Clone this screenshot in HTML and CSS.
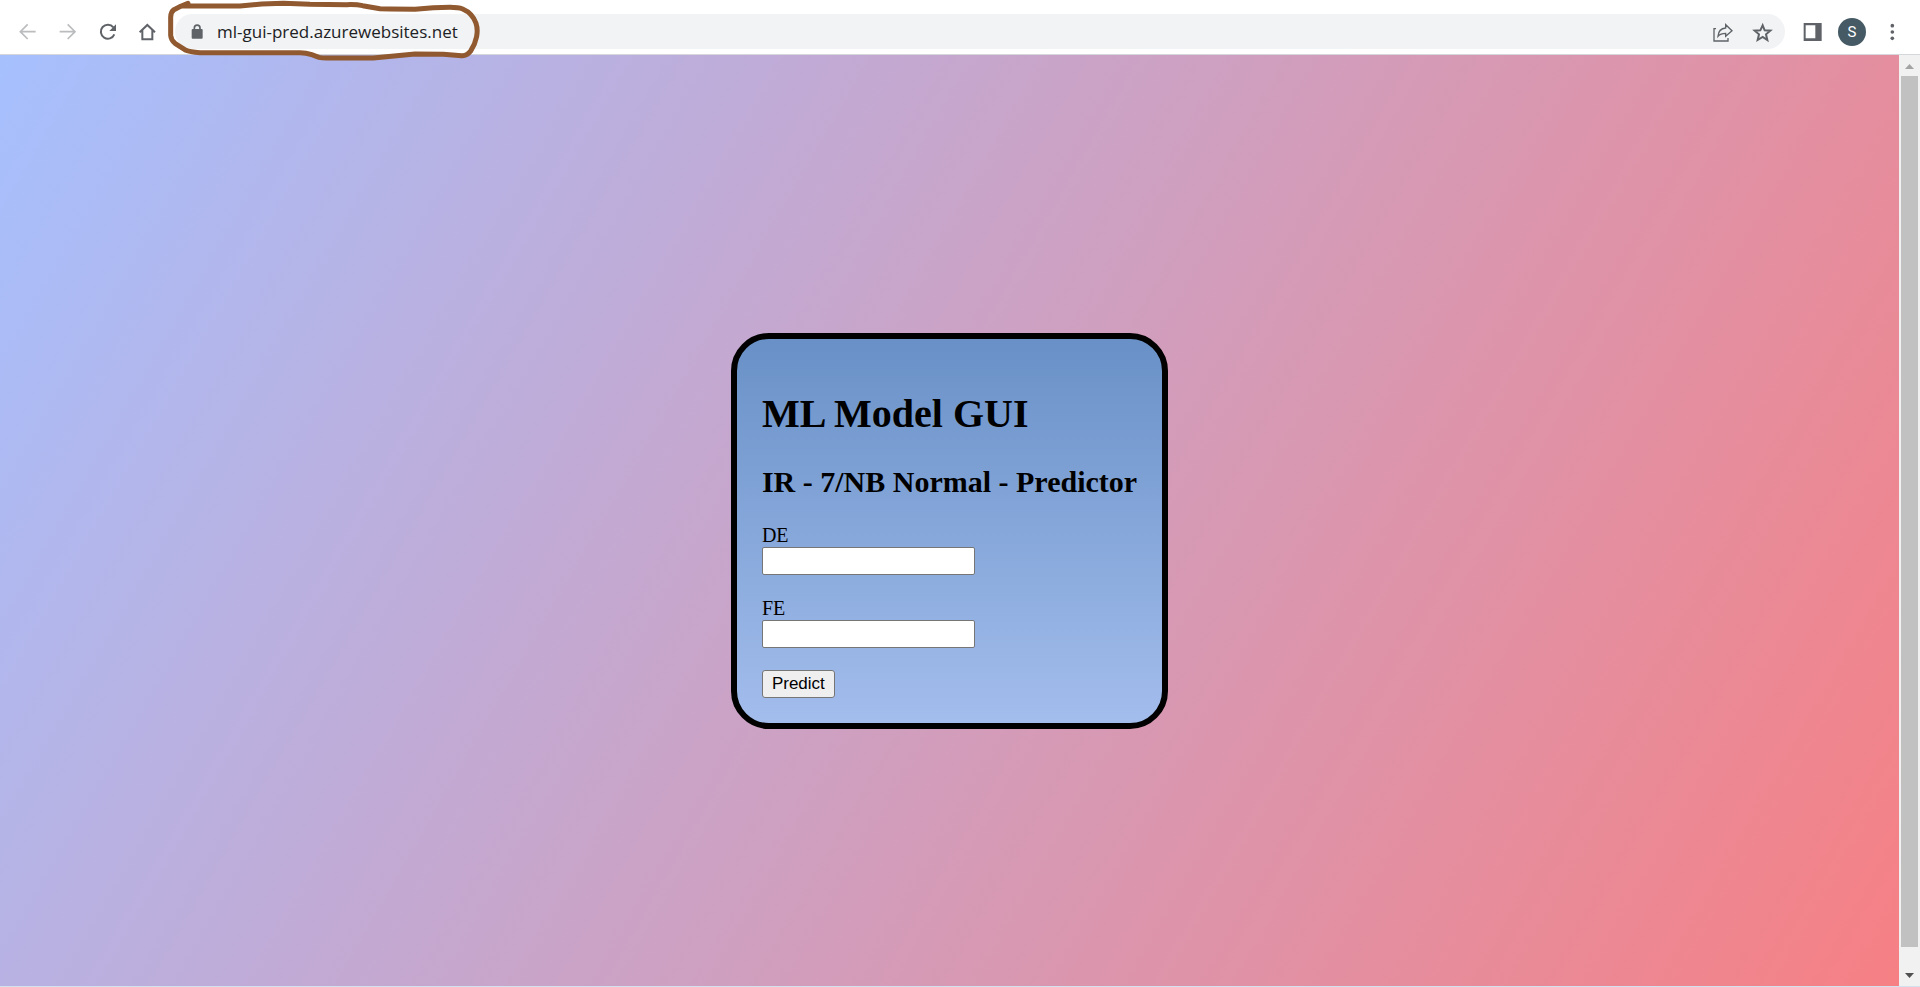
FILE: index.html
```html
<!DOCTYPE html>
<html lang="en">
<head>
<meta charset="utf-8">
<title>ML Model GUI</title>
<link rel="stylesheet" href="styles.css">
</head>
<body>
<header class="toolbar">
  <nav class="group" aria-label="Navigation">
    <button class="tool faded" type="button" aria-label="Back">
      <svg class="icon" viewBox="48 57 72 72"><path d="M107 92H62M83 70L61 92L83 114"/></svg>
    </button>
    <button class="tool faded" type="button" aria-label="Forward">
      <svg class="icon" viewBox="168 57 72 72"><path d="M179 92H224M203 70L225 92L203 114"/></svg>
    </button>
    <button class="tool" type="button" aria-label="Reload">
      <svg class="icon" viewBox="288 57 72 72"><path class="bold" d="M340 79A21 21 0 1 0 343 100"/><path class="solid" d="M348 70V90H328Z"/></svg>
    </button>
    <button class="tool" type="button" aria-label="Home">
      <svg class="icon" viewBox="408 57 72 72"><path class="bold" d="M419 94L442 72L465 94M427 88V115H457V88"/></svg>
    </button>
  </nav>
  <div class="omnibox">
    <svg class="lock" viewBox="76 61 72 72"><path class="solid" d="M99 88H126Q129 88 129 91V114Q129 117 126 117H99Q96 117 96 114V91Q96 88 99 88Z"/><path d="M104 90V85A8.500 8.500 0 0 1 121 85V90"/></svg>
    <input class="address" type="text" value="ml-gui-pred.azurewebsites.net" aria-label="Address">
    <button class="tool" type="button" aria-label="Share">
      <svg class="icon thin" viewBox="60 57 72 72"><path d="M78 83H72V120H114V111M84 106C85 91 92 82 107 81V71L126 89L107 106V97C96 97 89 100 84 106Z"/></svg>
    </button>
    <button class="tool" type="button" aria-label="Bookmark">
      <svg class="icon pointed" viewBox="180 57 72 72"><path d="M218 73L224 88L241 89L228 100L232 117L218 108L203 117L207 100L194 89L211 88Z"/></svg>
    </button>
  </div>
  <div class="group">
    <button class="tool" type="button" aria-label="Side panel">
      <svg class="icon" viewBox="330 57 72 72"><path class="solid" fill-rule="evenodd" d="M341 66H395V120H341ZM347 73V112H376V73Z"/></svg>
    </button>
    <button class="tool" type="button" aria-label="Profile"><span class="avatar">S</span></button>
    <button class="tool" type="button" aria-label="Menu">
      <svg class="icon" viewBox="570 57 72 72"><circle class="solid" cx="607" cy="74" r="5.500"/><circle class="solid" cx="607" cy="93" r="5.500"/><circle class="solid" cx="607" cy="112" r="5.500"/></svg>
    </button>
  </div>
  <svg class="scribble" viewBox="0 0 990 210" aria-hidden="true"><path d="M84 10L62 19L42 29Q32 36 32 52V106Q33 120 46 131L78 151Q88 156 120 158H420Q438 158 455 164L477 172Q484 174 500 174H640L710 167L765 162L850 163L905 167Q921 168 932 153C950 126 956 94 948 70Q938 40 908 27Q895 22 870 22L820 23L765 28L690 27L660 26L608 17Q590 13 560 14L450 13L370 10L305 12L240 18H70"/></svg>
</header>
<div class="viewport">
  <main class="page">
    <section class="card">
      <h1 class="title">ML Model GUI</h1>
      <h2 class="subtitle">IR - 7/NB Normal - Predictor</h2>
      <form class="form">
        <div class="field"><label for="de">DE</label><input class="entry" id="de" type="text"></div>
        <div class="field"><label for="fe">FE</label><input class="entry" id="fe" type="text"></div>
        <button class="predict" type="button">Predict</button>
      </form>
    </section>
  </main>
  <div class="scrollbar" aria-hidden="true">
    <svg class="arrow" viewBox="0 0 9 5"><path class="up" d="M0 5L4.500 0L9 5Z"/></svg>
    <div class="thumb"></div>
    <svg class="arrow" viewBox="0 0 9 5"><path class="down" d="M0 0H9L4.500 5Z"/></svg>
  </div>
</div>
</body>
</html>
```
FILE: styles.css
```css
* { box-sizing: border-box; }

body {
  margin: 0;
  height: 100vh;
  display: flex;
  flex-direction: column;
  overflow: hidden;
  font-family: "Liberation Serif", "Times New Roman", serif;
  font-size: 20px;
  line-height: 23px;
  color: #000;
}

.toolbar {
  position: relative;
  display: flex;
  align-items: center;
  gap: 7px;
  padding: 14px 8px 5px;
  background: #fff;
  border-bottom: 1px solid #d5d7da;
}

.group { display: flex; }

.tool {
  display: flex;
  align-items: center;
  justify-content: center;
  width: 40px;
  height: 35px;
  padding: 0;
  border: 0;
  background: none;
  color: #5f6368;
}

.faded { color: #babcbe; }

.icon, .lock {
  width: 24px;
  height: 24px;
  flex: none;
  fill: none;
  stroke: currentColor;
  stroke-width: 5;
}

.thin { stroke-width: 4; }
.bold { stroke-width: 6; }
.pointed { stroke-width: 6; stroke-miterlimit: 10; }
.solid { fill: currentColor; stroke: none; }
.lock { color: #5f6368; }

.omnibox {
  flex: 1;
  display: flex;
  align-items: center;
  height: 35px;
  padding: 0 3px 0 10px;
  border-radius: 18px;
  background: #f1f3f4;
}

.address {
  flex: 1;
  min-width: 0;
  margin-left: 8px;
  padding: 0;
  border: 0;
  outline: 0;
  background: none;
  font: 17px/24px "Open Sans", "Noto Sans", sans-serif;
  color: #202124;
}

.avatar {
  width: 28px;
  height: 28px;
  border-radius: 50%;
  background: #455a64;
  color: #fff;
  font: 15px/28px Roboto, sans-serif;
  text-align: center;
}

.scribble {
  position: absolute;
  top: 0;
  left: 160px;
  z-index: 1;
  width: 330px;
  height: 70px;
  fill: none;
  stroke: #90592f;
  stroke-width: 15;
  stroke-linecap: round;
  stroke-linejoin: round;
  pointer-events: none;
}

.viewport {
  flex: 1;
  display: flex;
  min-height: 0;
  border-bottom: 1px solid #d3e0ee;
}

.page {
  flex: 1;
  display: flex;
  align-items: center;
  justify-content: center;
  padding-top: 20px;
  background: linear-gradient(120deg, #a6c0fe 0%, #f68084 100%);
}

.card {
  padding: 25px;
  border: 6px solid #000;
  border-radius: 38px;
  background: linear-gradient(to top, #a3bded 0%, #6991c7 100%);
}

.title {
  margin: 27px 0;
  font-size: 40px;
  line-height: 46px;
}

.subtitle {
  margin: 0 0 25px;
  font-size: 30px;
  line-height: 35px;
}

.form {
  display: flex;
  flex-direction: column;
  align-items: flex-start;
  gap: 22px;
}

.field {
  display: flex;
  flex-direction: column;
}

.entry {
  width: 213px;
  height: 28px;
  padding: 1px 3px;
  border: 1px solid #767676;
  border-radius: 2px;
  background: #fff;
  font: 17px "Liberation Sans", Arial, sans-serif;
}

.predict {
  height: 28px;
  padding: 0 9px;
  border: 1px solid #767676;
  border-radius: 3px;
  background: #efefef;
  font: 17px "Liberation Sans", Arial, sans-serif;
  color: #000;
}

.scrollbar {
  display: flex;
  flex-direction: column;
  align-items: center;
  gap: 7px;
  width: 21px;
  padding: 9px 0 8px;
  background: #f1f1f1;
}

.arrow {
  width: 9px;
  height: 5px;
  flex: none;
}

.up { fill: #a3a3a3; }
.down { fill: #505050; }

.thumb {
  flex: 1;
  width: 17px;
  margin-bottom: 19px;
  background: #c1c1c1;
}
```
